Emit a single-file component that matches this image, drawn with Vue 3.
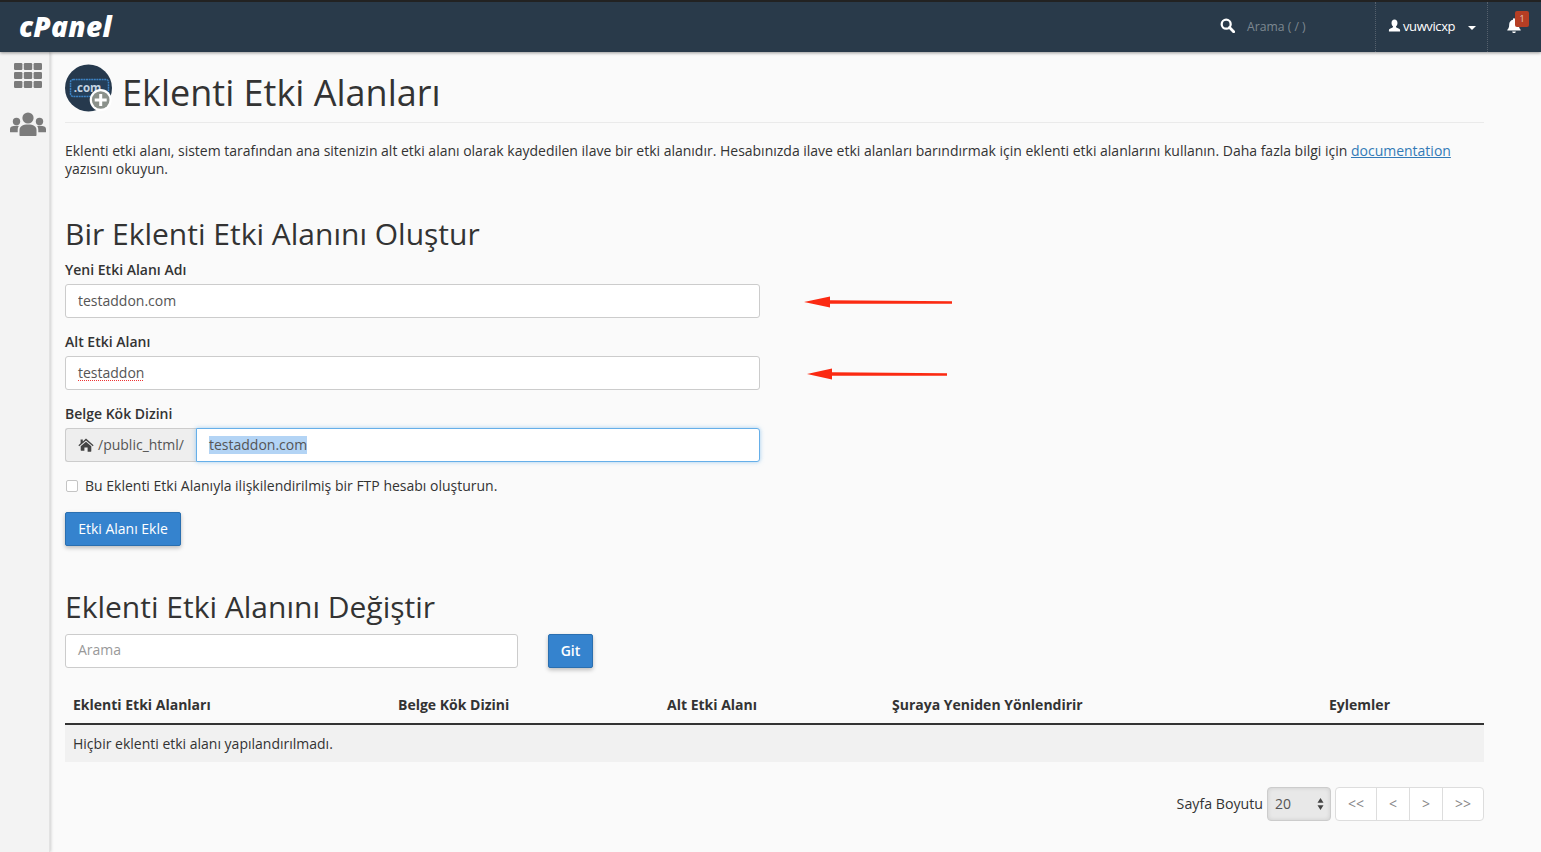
<script setup>
const columns = ['Eklenti Etki Alanları', 'Belge Kök Dizini', 'Alt Etki Alanı', 'Şuraya Yeniden Yönlendirir', 'Eylemler']
const pages = ['<<', '<', '>', '>>']
</script>

<template>
  <div class="page">
    <header class="topbar">
      <div class="logo">cPanel</div>
      <div class="top-right">
        <div class="search">
          <svg class="search-icon" viewBox="0 0 16 16"><circle cx="6.600" cy="6.600" r="4.800" fill="none" stroke="#fff" stroke-width="2.400"/><path d="M10.200 10.200 14.600 14.600" stroke="#fff" stroke-width="3" stroke-linecap="round"/></svg>
          <span class="search-text">Arama ( / )</span>
        </div>
        <div class="user">
          <svg class="user-icon" viewBox="0 0 14 14"><path d="M7 .5c2 0 3.200 1.600 3.200 3.700 0 1.500-.6 2.900-1.500 3.600-.3.800 0 1.200.8 1.500 1.700.6 3.500 1.100 3.500 2.500v1.700H1v-1.700c0-1.400 1.800-1.900 3.500-2.500.8-.3 1.100-.7.800-1.500-.9-.7-1.500-2.100-1.500-3.600C3.800 2.100 5 .5 7 .5z" fill="#fff"/></svg>
          <span>vuwvicxp</span>
          <i class="caret"></i>
        </div>
        <div class="bell">
          <svg viewBox="0 0 16 16" class="bell-icon"><path d="M8 .8c.6 0 1 .4 1 1v.5c2.300.5 3.800 2.400 3.800 4.700 0 3 .8 4.200 1.900 5.200v.8H1.300V12.200c1.100-1 1.900-2.200 1.900-5.200 0-2.300 1.500-4.200 3.800-4.700v-.5c0-.6.4-1 1-1zM6.200 14h3.600c0 1-.8 1.600-1.800 1.600S6.200 15 6.200 14z" fill="#fff"/></svg>
          <span class="badge">1</span>
        </div>
      </div>
    </header>

    <div class="body">
      <aside class="sidebar">
        <svg class="side-grid" viewBox="0 0 28 25">
          <g fill="#7b7b7b">
            <rect x="0" y="0" width="8.400" height="7" rx="1.200"/><rect x="9.800" y="0" width="8.400" height="7" rx="1.200"/><rect x="19.600" y="0" width="8.400" height="7" rx="1.200"/>
            <rect x="0" y="9" width="8.400" height="7" rx="1.200"/><rect x="9.800" y="9" width="8.400" height="7" rx="1.200"/><rect x="19.600" y="9" width="8.400" height="7" rx="1.200"/>
            <rect x="0" y="18" width="8.400" height="7" rx="1.200"/><rect x="9.800" y="18" width="8.400" height="7" rx="1.200"/><rect x="19.600" y="18" width="8.400" height="7" rx="1.200"/>
          </g>
        </svg>
        <svg class="side-users" viewBox="0 0 36 24">
          <g fill="#7b7b7b">
            <circle cx="18" cy="6" r="5.600"/>
            <circle cx="6.500" cy="9.500" r="3.700"/>
            <circle cx="29.500" cy="9.500" r="3.700"/>
            <path d="M9.500 23v-5c0-3.500 3-5.500 8.500-5.500s8.500 2 8.500 5.500v5c0 .6-.4 1-1 1h-15c-.6 0-1-.4-1-1z"/>
            <path d="M0 20v-3c0-2 2.200-3.200 6.500-3.200 1 0 1.800.1 2.400.2-.8 1-1.200 2.400-1.200 4v2.200H1c-.6 0-1-.1-1-.2z"/>
            <path d="M36 20v-3c0-2-2.200-3.200-6.500-3.200-1 0-1.800.1-2.400.2.800 1 1.200 2.400 1.200 4v2.200H35c.6 0 1-.1 1-.2z"/>
          </g>
        </svg>
      </aside>

      <main class="content">
        <div class="title-row">
          <svg class="title-icon" viewBox="0 0 48 48">
            <circle cx="23.500" cy="24" r="23.500" fill="#26394d"/>
            <rect x="5.500" y="15.500" width="38" height="17" rx="2.500" fill="#243f5a" stroke="#3d83c4" stroke-width="1.500" stroke-dasharray="2 .6"/>
            <text x="22.500" y="27.500" text-anchor="middle" class="dotcom">.com</text>
            <circle cx="35.700" cy="36" r="11" fill="#fff"/>
            <circle cx="35.700" cy="36" r="8.800" fill="#8b918b"/>
            <path d="M35.700 30v12M29.700 36h12" stroke="#fff" stroke-width="3"/>
          </svg>
          <h1>Eklenti Etki Alanları</h1>
        </div>

        <p class="intro">Eklenti etki alanı, sistem tarafından ana sitenizin alt etki alanı olarak kaydedilen ilave bir etki alanıdır. Hesabınızda ilave etki alanları barındırmak için eklenti etki alanlarını kullanın. Daha fazla bilgi için <a>documentation</a> yazısını okuyun.</p>

        <h2 class="h-create">Bir Eklenti Etki Alanını Oluştur</h2>
        <form class="form" @submit.prevent>
          <label class="field">
            <span class="lbl">Yeni Etki Alanı Adı</span>
            <input class="input real" value="testaddon.com" />
          </label>
          <label class="field">
            <span class="lbl">Alt Etki Alanı</span>
            <span class="input fake"><span class="squiggle">testaddon</span></span>
          </label>
          <div class="field">
            <span class="lbl">Belge Kök Dizini</span>
            <div class="group">
              <span class="addon">
                <svg class="home" viewBox="0 0 16 14"><path d="M8 .6 15.600 7.200l-.8 1L8 2.400 1.200 8.200l-.8-1L2.600 5.300V1.500h2.200v1.900zM8 3.700l5.300 4.600v4.900c0 .3-.2.5-.5.500H9.600V9.600H6.400v3.100H3.200c-.3 0-.5-.2-.5-.5V8.300z" fill="#444"/></svg>
                <span class="addon-text">/public_html/</span>
              </span>
              <span class="input focus"><span class="selected">testaddon.com</span></span>
            </div>
          </div>
          <label class="check">
            <span class="box"></span>
            <span>Bu Eklenti Etki Alanıyla ilişkilendirilmiş bir FTP hesabı oluşturun.</span>
          </label>
          <button class="btn add" type="button">Etki Alanı Ekle</button>
        </form>

        <h2 class="h-change">Eklenti Etki Alanını Değiştir</h2>
        <div class="search-row">
          <span class="input search-input placeholder">Arama</span>
          <button class="btn git" type="button">Git</button>
        </div>

        <div class="table">
          <div class="thead">
            <div v-for="c in columns" :key="c" class="th">{{ c }}</div>
          </div>
          <div class="empty">Hiçbir eklenti etki alanı yapılandırılmadı.</div>
        </div>

        <div class="pager">
          <span class="psize">Sayfa Boyutu</span>
          <div class="select">
            <span>20</span>
            <svg class="updown" viewBox="0 0 8 14"><path d="M4 0 7.500 5.500H.5zM4 14 .5 8.500h7z" fill="#444"/></svg>
          </div>
          <div class="pages">
            <span v-for="p in pages" :key="p" class="pg">{{ p }}</span>
          </div>
        </div>
      </main>
    </div>

    <svg class="arrow arrow-1" viewBox="0 0 150 14"><path d="M1 7 27 1.500v3.800L149 6.200v2.600L27 8.800V12.500z" fill="#fb2a12"/></svg>
    <svg class="arrow arrow-2" viewBox="0 0 142 14"><path d="M1 7 26 1.500v3.800L141 6.200v2.600L26 8.800V12.500z" fill="#fb2a12"/></svg>
  </div>
</template>

<style>
html, body { margin: 0; background: #fafafa; }
</style>

<style scoped>
.page {
  position: relative;
  width: 1541px;
  height: 852px;
  overflow: hidden;
  background: #fafafa;
  font-family: "Open Sans", sans-serif;
  font-size: 14px;
  color: #333;
}
.topbar {
  position: relative;
  z-index: 2;
  box-sizing: border-box;
  height: 52px;
  background: #293a4a;
  border-top: 2px solid #222;
  box-shadow: 0 1px 3px rgba(0,0,0,.4);
  display: flex;
  justify-content: space-between;
  align-items: center;
}
.logo {
  margin-left: 19px;
  font-family: "Open Sans", sans-serif;
  font-weight: 800;
  font-style: italic;
  font-size: 28px;
  letter-spacing: .25px;
  color: #fff;
  line-height: 1;
  margin-top: -3px;
}
.top-right { display: flex; align-items: center; height: 100%; }
.search { display: flex; align-items: center; width: 155px; height: 100%; border-right: 1px dotted #55606c; }
.search-icon { width: 15px; height: 15px; margin-right: 12px; margin-top: -4px; }
.search-text { font-size: 12.200px; color: #7d8891; margin-top: -1px; }
.user { display: flex; align-items: center; width: 112px; padding-left: 12px; box-sizing: border-box; height: 100%; border-right: 1px dotted #55606c; color: #fff; font-size: 13px; letter-spacing: -.4px; }
.user span { margin-top: -2px; }
.user-icon { width: 13px; height: 13px; margin-right: 2px; margin-top: -3px; }
.caret { margin-left: 13px; margin-top: 1px; border-left: 4px solid transparent; border-right: 4px solid transparent; border-top: 4px solid #fff; }
.bell { position: relative; width: 53px; height: 100%; }
.bell-icon { position: absolute; left: 18px; top: 15px; width: 16px; height: 17px; }
.badge { position: absolute; left: 27px; top: 9px; width: 14px; height: 16px; background: #b53e24; border-radius: 2px; color: #e8c8c0; font-size: 9px; line-height: 15px; text-align: center; }
.body { display: flex; height: 800px; }
.sidebar {
  width: 50px;
  flex: none;
  box-sizing: border-box;
  background: #f3f3f3;
  border-right: 1px solid #e2e2e2;
  box-shadow: 1px 0 3px rgba(0,0,0,.18);
  display: flex;
  flex-direction: column;
  align-items: center;
  padding-top: 11px;
  padding-left: 7px;
}
.side-grid { width: 28px; height: 25px; }
.side-users { width: 36px; height: 24px; margin-top: 24px; }
.content { flex: 1; padding: 0 57px 0 15px; min-width: 0; }
.title-row { display: flex; align-items: flex-start; height: 70px; border-bottom: 1px solid #eaeaea; }
.title-icon { width: 48px; height: 48px; margin: 12px 9px 0 0; flex: none; }
.dotcom { font-family: "Open Sans", sans-serif; font-size: 11.500px; font-weight: 700; fill: #c5d4e2; }
h1 { margin: 23px 0 0; font-weight: 400; font-size: 36px; line-height: 36px; color: #333; }
.intro { margin: 19px 0 0; line-height: 18px; font-size: 14px; color: #333; letter-spacing: -.006px; }
.intro a { color: #337ab7; text-decoration: underline; }
h2 { margin: 0; font-weight: 400; font-size: 30px; line-height: 36px; color: #333; }
.h-create { margin-top: 38px; }
.form { display: flex; flex-direction: column; align-items: flex-start; margin-top: 8px; }
.field { display: block; width: 695px; margin-bottom: 14px; }
.lbl { display: block; font-weight: 600; font-size: 14px; line-height: 20px; margin-bottom: 4px; }
.input {
  display: block;
  box-sizing: border-box;
  width: 100%;
  height: 34px;
  padding: 0 12px;
  border: 1px solid #ccc;
  border-radius: 3px;
  background: #fff;
  font: 14px/32px "Open Sans", sans-serif;
  color: #555;
  outline: none;
}
.real { padding-bottom: 2px; }
.squiggle { text-decoration: underline dotted #e33; text-decoration-thickness: 1px; text-underline-offset: 2px; }
.group { display: flex; }
.addon {
  box-sizing: border-box;
  flex: none;
  width: 131px;
  height: 34px;
  display: flex;
  align-items: center;
  gap: 4px;
  padding-left: 13px;
  background: #eee;
  border: 1px solid #ccc;
  border-right: 0;
  border-radius: 3px 0 0 3px;
  color: #555;
}
.addon-text { margin-top: -1px; }
.home { width: 16px; height: 14px; margin-top: -1px; margin-left: -1px; }
.focus { flex: 1; width: auto; border-color: #66afe9; border-radius: 0 3px 3px 0; box-shadow: 0 0 4px rgba(102,175,233,.6); }
.selected { background: #b3d4f5; display: inline-block; line-height: 18px; }
.check { display: flex; align-items: center; gap: 8px; height: 20px; margin-top: -1px; }
.box { width: 10px; height: 10px; border: 1px solid #c4c4c4; border-radius: 2px; background: #fff; margin-top: 2px; margin-left: 1px; margin-right: -1px; }
.btn {
  border: 1px solid #2a6fb0;
  border-radius: 2px;
  background: #3583ce;
  color: #fff;
  font: 14px "Open Sans", sans-serif;
  box-shadow: 0 2px 4px rgba(0,0,0,.25);
  padding: 0 0 2px;
  height: 34px;
}
.add { width: 116px; margin-top: 17px; }
.h-change { margin-top: 43px; }
.search-row { display: flex; align-items: center; margin-top: 9px; gap: 30px; }
.search-input { width: 453px; flex: none; }
.placeholder { color: #999; line-height: 30px; }
.git { width: 45px; font-weight: 600; }
.table { margin-top: 18px; }
.thead {
  display: grid;
  grid-template-columns: 325px 269px 225px 437px 163px;
  border-bottom: 2px solid #333;
  height: 39px;
  box-sizing: border-box;
}
.th { padding: 9px 8px 0; font-weight: 700; line-height: 20px; }
.empty { height: 37px; line-height: 37px; padding-left: 8px; background: #f1f1f1; }
.pager { display: flex; justify-content: flex-end; align-items: center; margin-top: 25px; height: 34px; }
.psize { margin-right: 4px; font-size: 14.200px; padding-bottom: 2px; }
.select {
  box-sizing: border-box;
  width: 64px;
  height: 34px;
  border: 1px solid #ccc;
  border-radius: 4px;
  background: #e8e8e8;
  box-shadow: inset 0 0 4px rgba(0,0,0,.12);
  display: flex;
  align-items: center;
  justify-content: space-between;
  padding: 0 6px 2px 7px;
  color: #555;
}
.updown { width: 7px; height: 12px; margin-top: 2px; }
.pages { display: flex; margin-left: 4px; border: 1px solid #ddd; border-radius: 4px; background: #fff; height: 34px; box-sizing: border-box; }
.pg { box-sizing: border-box; display: flex; align-items: center; justify-content: center; width: 33px; color: #888; border-left: 1px solid #ddd; padding-bottom: 2px; }
.pg:first-child { width: 40px; border-left: 0; }
.pg:last-child { width: 41px; }
.arrow { position: absolute; z-index: 3; height: 14px; }
.arrow-1 { left: 802px; top: 295px; width: 152px; }
.arrow-2 { left: 805px; top: 367px; width: 144px; }
</style>
